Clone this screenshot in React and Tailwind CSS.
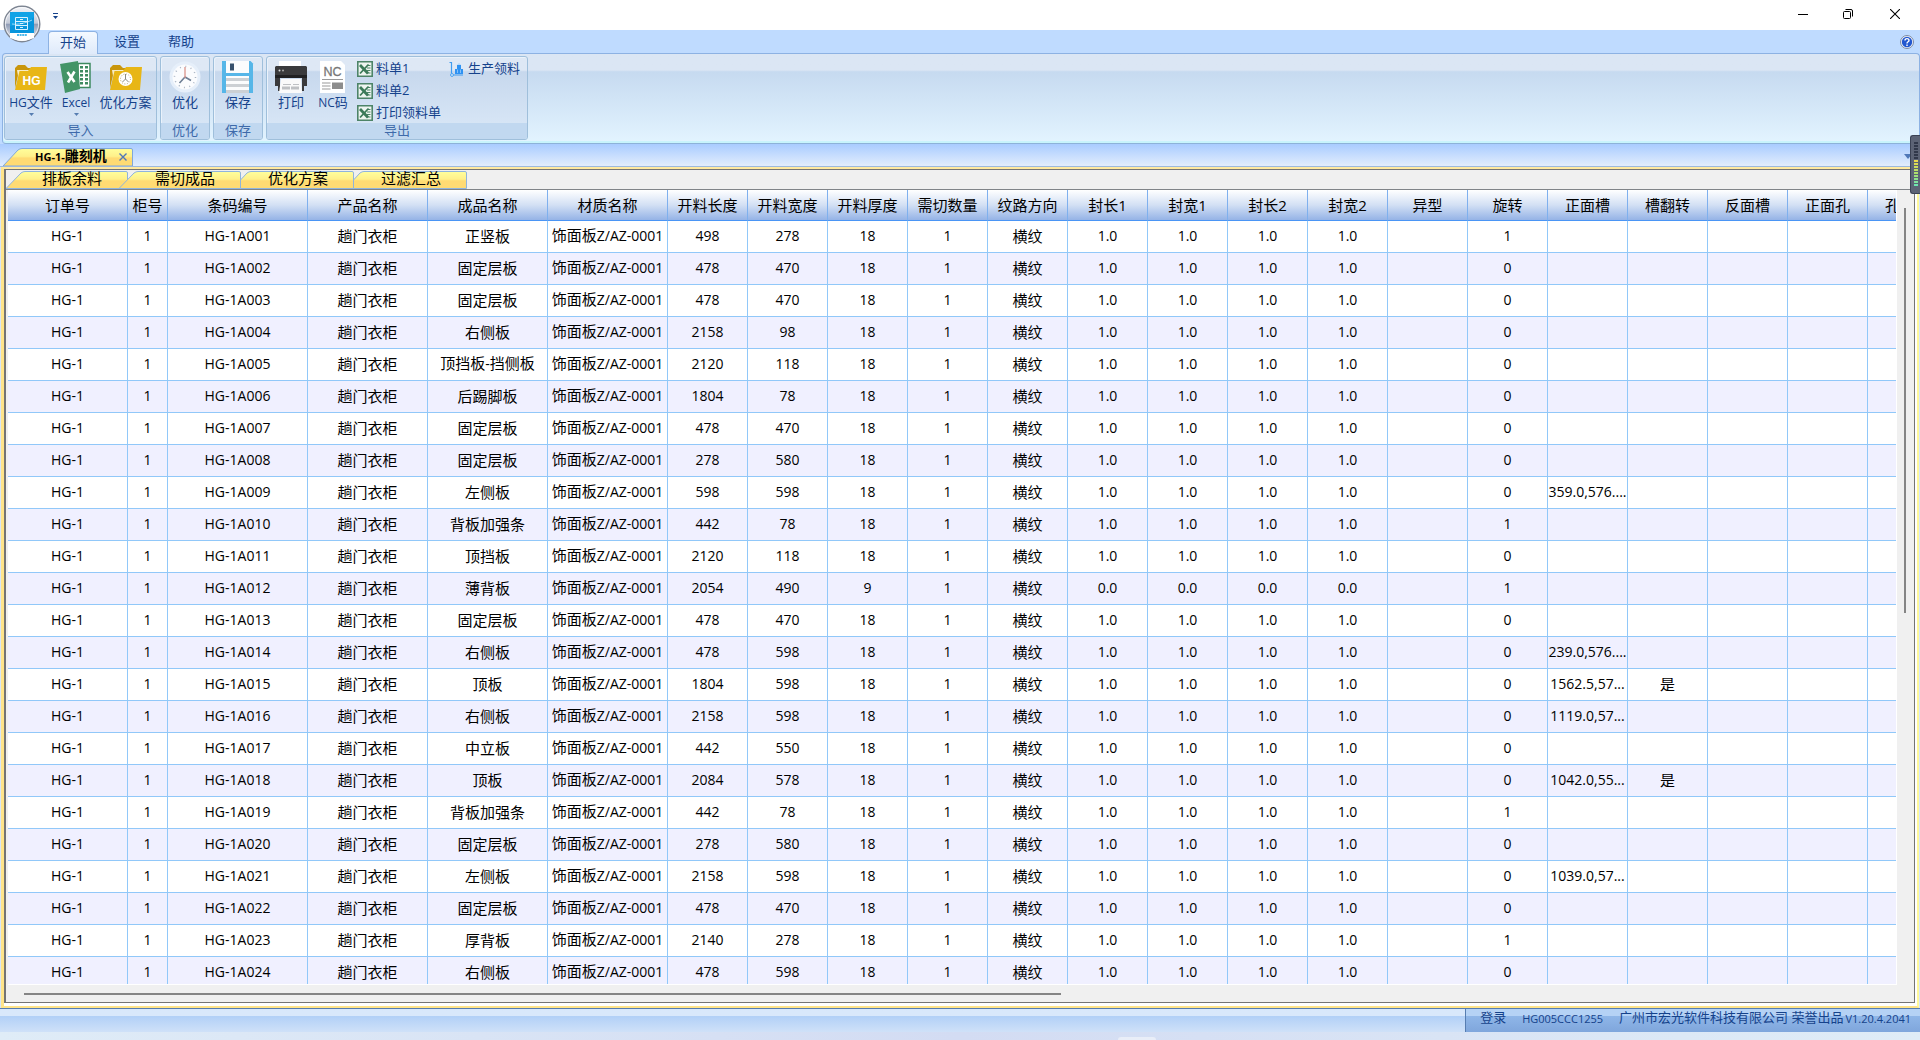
import clsx from "clsx";

const COLUMNS = [
  { key: "order", title: "订单号", width: "w-[120px]" },
  { key: "cabinet", title: "柜号", width: "w-[40px]" },
  { key: "barcode", title: "条码编号", width: "w-[140px]" },
  { key: "product", title: "产品名称", width: "w-[120px]" },
  { key: "part", title: "成品名称", width: "w-[120px]" },
  { key: "material", title: "材质名称", width: "w-[120px]" },
  { key: "length", title: "开料长度", width: "w-[80px]" },
  { key: "width", title: "开料宽度", width: "w-[80px]" },
  { key: "thick", title: "开料厚度", width: "w-[80px]" },
  { key: "count", title: "需切数量", width: "w-[80px]" },
  { key: "grain", title: "纹路方向", width: "w-[80px]" },
  { key: "l1", title: "封长1", width: "w-[80px]" },
  { key: "w1", title: "封宽1", width: "w-[80px]" },
  { key: "l2", title: "封长2", width: "w-[80px]" },
  { key: "w2", title: "封宽2", width: "w-[80px]" },
  { key: "shape", title: "异型", width: "w-[80px]" },
  { key: "rotate", title: "旋转", width: "w-[80px]" },
  { key: "frontSlot", title: "正面槽", width: "w-[80px]" },
  { key: "slotFlip", title: "槽翻转", width: "w-[80px]" },
  { key: "backSlot", title: "反面槽", width: "w-[80px]" },
  { key: "frontHole", title: "正面孔", width: "w-[80px]" },
  { key: "holeFlip", title: "孔翻转", width: "w-[80px]" },
];

// name, length, width, thickness, edge, rotate, front slot, slot flip
const PARTS = [
  ["正竖板", 498, 278, 18, "1.0", 1],
  ["固定层板", 478, 470, 18, "1.0", 0],
  ["固定层板", 478, 470, 18, "1.0", 0],
  ["右侧板", 2158, 98, 18, "1.0", 0],
  ["顶挡板-挡侧板", 2120, 118, 18, "1.0", 0],
  ["后踢脚板", 1804, 78, 18, "1.0", 0],
  ["固定层板", 478, 470, 18, "1.0", 0],
  ["固定层板", 278, 580, 18, "1.0", 0],
  ["左侧板", 598, 598, 18, "1.0", 0, "359.0,576...."],
  ["背板加强条", 442, 78, 18, "1.0", 1],
  ["顶挡板", 2120, 118, 18, "1.0", 0],
  ["薄背板", 2054, 490, 9, "0.0", 1],
  ["固定层板", 478, 470, 18, "1.0", 0],
  ["右侧板", 478, 598, 18, "1.0", 0, "239.0,576...."],
  ["顶板", 1804, 598, 18, "1.0", 0, "1562.5,57...", "是"],
  ["右侧板", 2158, 598, 18, "1.0", 0, "1119.0,57..."],
  ["中立板", 442, 550, 18, "1.0", 0],
  ["顶板", 2084, 578, 18, "1.0", 0, "1042.0,55...", "是"],
  ["背板加强条", 442, 78, 18, "1.0", 1],
  ["固定层板", 278, 580, 18, "1.0", 0],
  ["左侧板", 2158, 598, 18, "1.0", 0, "1039.0,57..."],
  ["固定层板", 478, 470, 18, "1.0", 0],
  ["厚背板", 2140, 278, 18, "1.0", 1],
  ["右侧板", 478, 598, 18, "1.0", 0],
];

const ROWS = PARTS.map(([part, length, width, thick, edge, rotate, frontSlot, slotFlip], i) => ({
  order: "HG-1",
  cabinet: 1,
  barcode: `HG-1A${String(i + 1).padStart(3, "0")}`,
  product: "趟门衣柜",
  part,
  material: "饰面板Z/AZ-0001",
  length,
  width,
  thick,
  count: 1,
  grain: "横纹",
  l1: edge,
  w1: edge,
  l2: edge,
  w2: edge,
  rotate,
  frontSlot,
  slotFlip,
}));

const SUB_TABS = ["排板余料", "需切成品", "优化方案", "过滤汇总"];

/* ---------- icons ---------- */

function LogoIcon() {
  return (
    <svg viewBox="0 0 38 38" className="size-[38px]">
      <defs>
        <linearGradient id="orb" x1="0" y1="0" x2="0" y2="1">
          <stop offset="0" stopColor="#f4f6fa" />
          <stop offset="0.48" stopColor="#c3c9d6" />
          <stop offset="0.5" stopColor="#8f9bb4" />
          <stop offset="1" stopColor="#f5f8fc" />
        </linearGradient>
      </defs>
      <circle cx="19" cy="19" r="17.8" fill="url(#orb)" stroke="#7d8592" strokeWidth="1.4" />
      <circle cx="19" cy="19" r="16.6" fill="none" stroke="#fff" strokeOpacity="0.7" />
      <path d="M7 7h24v26q-12 5-24 0z" fill="#fff" />
      <path d="M7 7h24v21H7z" fill="#0fa2e6" />
      <path d="M7 21c8 0 18-4 24-9v16H7z" fill="#0795dc" />
      <g fill="none" stroke="#d8f2ff" strokeWidth="1">
        <path d="M12.500 12.500h12v12h-12zM12.500 16.500h12M12.500 20.500h12M17 14.500h3M17 18.500h3M17 22.500h3" />
        <path d="M9 19c6 1 14-1 20-4" strokeOpacity="0.7" />
      </g>
      <path d="M14 30h10" stroke="#4db8ea" strokeWidth="2" strokeDasharray="2 0.600" />
    </svg>
  );
}

function FolderIcon({ children }) {
  return (
    <svg viewBox="0 0 32 32" className="size-8">
      <path d="M0 27V7l3-3h7l3 3h3v3H4z" fill="#c9960c" />
      <path d="M2 9h14v3L4 21z" fill="#f7ecc4" />
      <path d="M4.500 10H13l3-4h16L30 29H0z" fill="#e8b616" />
      {children}
    </svg>
  );
}

function HgFolderIcon() {
  return (
    <FolderIcon>
      <text x="16.500" y="23.500" textAnchor="middle" fontSize="12" fontWeight="700" fill="#fff" fontFamily="Liberation Sans, sans-serif">HG</text>
    </FolderIcon>
  );
}

function PlanFolderIcon() {
  return (
    <FolderIcon>
      <circle cx="15.500" cy="18" r="7" fill="#fff" />
      <circle cx="15.500" cy="18" r="5" fill="none" stroke="#b9a66c" strokeDasharray="1 1.600" />
      <path d="M15.500 13v5l3 3M15.500 18l-3 3" fill="none" stroke="#8a8a80" />
    </FolderIcon>
  );
}

function ExcelIcon() {
  return (
    <svg viewBox="0 0 32 32" className="size-8">
      <path d="M18 2.500h12v24H18z" fill="#fff" stroke="#3d8a5f" strokeWidth="1.500" />
      <path d="M20 5h3v2.500h-3zM25 5h3v2.500h-3zM20 9h3v2.500h-3zM25 9h3v2.500h-3zM20 13h3v2.500h-3zM25 13h3v2.500h-3zM20 17h3v2.500h-3zM25 17h3v2.500h-3zM20 21h3v2.500h-3zM25 21h3v2.500h-3z" fill="#3d8a5f" />
      <path d="M0 3l18-3 2 28-15 4z" fill="#439467" />
      <path d="M7.500 11l7 10M14.500 10.500L8 21.500" stroke="#fff" strokeWidth="2.600" />
    </svg>
  );
}

function ClockIcon() {
  return (
    <svg viewBox="0 0 32 32" className="size-8">
      <circle cx="16" cy="16" r="15.500" fill="#e6effa" />
      <circle cx="16" cy="16" r="12.500" fill="#fbfcfe" />
      <circle cx="16" cy="16" r="10.500" fill="none" stroke="#a9b4c4" strokeWidth="1.500" strokeDasharray="1 4.500" />
      <path d="M16 16l-5.500 6M16 16l6 3.500" stroke="#6e7f95" strokeWidth="1.600" />
      <path d="M16 6v11" stroke="#d98a80" strokeWidth="1.200" />
    </svg>
  );
}

function SaveIcon() {
  return (
    <svg viewBox="0 0 32 32" className="size-8">
      <path d="M0 0h28.500L31 2.500V32H0z" fill="#56b6e8" />
      <path d="M4 0h23v12H4zM4 15h23v17H4z" fill="#fbfcfd" />
      <path d="M8 2.500h4v7H8z" fill="#36506c" />
      <path d="M4 17h23v3H4zM4 23h23v3H4zM4 29h23v3H4z" fill="#ccd0d4" />
    </svg>
  );
}

function PrinterIcon() {
  return (
    <svg viewBox="0 0 32 32" className="size-8">
      <path d="M4 0h22v8H4z" fill="#fff" />
      <path d="M0 6l1-1h30l1 1v19h-3v5h-2V17H5v13H3v-5H0z" fill="#3a3a3c" />
      <path d="M0 14h32v3H0z" fill="#202022" />
      <circle cx="4.500" cy="9.500" r="1" fill="#ddd" />
      <circle cx="8" cy="9.500" r="1" fill="#aaa" />
      <path d="M6 18h20l1 14H4z" fill="#fafafa" />
      <path d="M8 23h8v1H8zM18 23h6v1h-6zM7 25.500h8v3H7zM16 25.500h8v3h-8z" fill="#bfc1c4" />
    </svg>
  );
}

function NcIcon() {
  return (
    <svg viewBox="0 0 26 32" className="h-8 w-[26px]">
      <path d="M0 0h21l4 4v28H0z" fill="#fff" />
      <text x="12.500" y="15" textAnchor="middle" fontSize="12.500" fill="#777" stroke="#777" strokeWidth="0.300" fontFamily="Liberation Sans, sans-serif">NC</text>
      <path d="M2 18.500h21M2 22h8.500M2 25h8.500M2 28h8.500" stroke="#999" />
      <path d="M12 21.500h11V28H12z" fill="#8c8c8c" />
    </svg>
  );
}

function SheetIcon() {
  return (
    <svg viewBox="0 0 16 16" className="size-4 shrink-0">
      <path d="M0.800 0.800h14.400v14.400H0.800z" fill="#eef5f0" stroke="#4d8468" strokeWidth="1.600" />
      <path d="M10 4.500h3.500M10 7h3.500M10 9.500h3.500M10 12h3.500" stroke="#4d8468" />
      <path d="M3 4l8 8.500" stroke="#3c7a59" strokeWidth="2.800" />
      <path d="M11.500 3.500L3 12.500" stroke="#3c7a59" strokeWidth="1.800" />
    </svg>
  );
}

function TrolleyIcon() {
  return (
    <svg viewBox="0 0 16 16" className="size-4 shrink-0">
      <path d="M0.500 1.500h2V13M3.500 14H14" fill="none" stroke="#3f9cf0" strokeWidth="1.200" />
      <circle cx="3" cy="14" r="1.400" fill="#fff" stroke="#3f9cf0" />
      <path d="M6 8h8v5H6zM8 4h4v4H8z" fill="#2f92f2" />
      <path d="M9 4V3h2v1M8.500 8.500V12M11.500 8.500V12" fill="none" stroke="#9ccdfa" strokeWidth="0.800" />
    </svg>
  );
}

function HelpIcon() {
  return (
    <svg viewBox="0 0 14 14" className="size-3.5">
      <circle cx="7" cy="7" r="6.500" fill="#f2f6fd" stroke="#7d8ba3" />
      <circle cx="7" cy="7" r="5.200" fill="#2257cf" />
      <path d="M5 5.500c0-2.600 4-2.400 4 0C9 6.800 7 6.800 7 8.400M7 9.500v1.400" fill="none" stroke="#fff" strokeWidth="1.400" />
    </svg>
  );
}

function Caret({ className }) {
  return (
    <svg viewBox="0 0 5 3" className={clsx("h-[3px] w-[5px]", className)}>
      <path d="M0 0h5L2.500 3z" fill="currentColor" />
    </svg>
  );
}

/* ---------- title bar ---------- */

function TitleBar() {
  return (
    <header className="relative flex h-[30px] shrink-0 items-center justify-between bg-white">
      <button aria-label="菜单" className="absolute top-[5px] left-[3px] z-10 rounded-full">
        <LogoIcon />
      </button>
      <button aria-label="自定义" className="mt-0.5 ml-[53px] flex flex-col items-center gap-0.5 text-[#15428b]">
        <span className="h-px w-[5px] bg-[#15428b]" />
        <Caret />
      </button>
      <div className="flex h-7 self-start text-black">
        <button aria-label="最小化" className="flex w-[45px] items-center justify-center">
          <svg viewBox="0 0 10 10" className="size-2.5"><path d="M0 5.500h10" stroke="currentColor" /></svg>
        </button>
        <button aria-label="还原" className="flex w-[45px] items-center justify-center">
          <svg viewBox="0 0 10 10" className="size-2.5" fill="none" stroke="currentColor">
            <rect x="0.500" y="2.500" width="7" height="7" rx="1" />
            <path d="M2.500 0.500H8A1.500 1.500 0 0 1 9.500 2v5.500" />
          </svg>
        </button>
        <button aria-label="关闭" className="flex w-[50px] items-center justify-center">
          <svg viewBox="0 0 10 10" className="size-2.5"><path d="M0 0l10 10M10 0L0 10" stroke="currentColor" strokeWidth="1.100" /></svg>
        </button>
      </div>
    </header>
  );
}

/* ---------- ribbon ---------- */

function MenuTabs() {
  return (
    <nav className="flex h-[23px] shrink-0 items-end bg-[#bfdbff] pr-1.5 pl-12 text-[13px] leading-5 text-[#15428b]">
      <button className="relative z-10 -mb-px h-[23px] w-[50px] rounded-t-[4px] border border-b-0 border-[#8db2e3] bg-gradient-to-b from-[#f4f9ff] to-[#dfeafa] pb-1">
        开始
      </button>
      <button className="ml-1 h-[22px] w-[50px] pb-0.5">设置</button>
      <button className="ml-1 h-[22px] w-[50px] pb-0.5">帮助</button>
      <button aria-label="帮助" className="mb-1 ml-auto">
        <HelpIcon />
      </button>
    </nav>
  );
}

function RibbonGroup({ title, children }) {
  return (
    <section className="flex flex-col overflow-hidden rounded-[3px] border border-[#9fbfdb] bg-gradient-to-b from-[#dee8f5] from-16% via-[#c7d8ed] via-18% to-[#dbe9f8] shadow-[inset_1px_1px_0_#eaf2fb]">
      <div className="flex flex-1 px-1 pt-1">{children}</div>
      <h2 className="h-4 bg-[#c1d8f0] text-center text-[13px] leading-[14px] text-[#3e6aaa]">{title}</h2>
    </section>
  );
}

function BigButton({ icon, label, caret, width }) {
  return (
    <button className={clsx("flex flex-col items-center text-[13px] leading-[18px] text-[#15428b]", width)}>
      {icon}
      <span className="whitespace-nowrap">{label}</span>
      {caret && <Caret className="mt-0.5 text-[#567db1]" />}
    </button>
  );
}

function SmallButton({ icon, label }) {
  return (
    <button className="flex h-4 items-center gap-[3px] text-[13px] leading-[14px] whitespace-nowrap text-[#15428b]">
      {icon}
      <span className="pb-0.5">{label}</span>
    </button>
  );
}

function Ribbon() {
  return (
    <div className="ml-0.5 flex h-[91px] shrink-0 gap-[3px] rounded-[4px] border border-[#8db2e3] border-b-[#8db2d8] bg-gradient-to-b from-[#dbe6f4] from-18% via-[#c6daf0] via-20% to-[#e3f4ff] px-px pt-0.5 pb-[3px] shadow-[inset_0_-2px_0_#c8f4fc]">
      <RibbonGroup title="导入">
        <BigButton icon={<HgFolderIcon />} label={<><span className="text-xs">HG</span>文件</>} caret width="w-[44px]" />
        <BigButton icon={<ExcelIcon />} label={<span className="text-xs">Excel</span>} caret width="w-[46px]" />
        <BigButton icon={<PlanFolderIcon />} label="优化方案" width="w-[53px]" />
      </RibbonGroup>
      <RibbonGroup title="优化">
        <BigButton icon={<ClockIcon />} label="优化" width="w-[40px]" />
      </RibbonGroup>
      <RibbonGroup title="保存">
        <BigButton icon={<SaveIcon />} label="保存" width="w-[40px]" />
      </RibbonGroup>
      <RibbonGroup title="导出">
        <BigButton icon={<PrinterIcon />} label="打印" width="w-[40px]" />
        <BigButton icon={<NcIcon />} label={<><span className="text-xs">NC</span>码</>} width="w-[44px]" />
        <div className="ml-0.5 flex flex-col gap-1.5">
          <SmallButton icon={<SheetIcon />} label="料单1" />
          <SmallButton icon={<SheetIcon />} label="料单2" />
          <SmallButton icon={<SheetIcon />} label="打印领料单" />
        </div>
        <div className="ml-2 pr-[3px]">
          <SmallButton icon={<TrolleyIcon />} label="生产领料" />
        </div>
      </RibbonGroup>
    </div>
  );
}

/* ---------- document tabs ---------- */

function DocumentTabs() {
  return (
    <div className="flex h-[22px] shrink-0 items-end justify-between bg-gradient-to-b from-[#a9ccff] to-[#e2edfc]">
      <div className="relative ml-[3px] flex h-[18px] w-[130px] items-center">
        <svg viewBox="0 0 130 18" preserveAspectRatio="none" className="absolute inset-0 h-full w-full">
          <defs>
            <linearGradient id="tab" x1="0" y1="0" x2="0" y2="1">
              <stop offset="0" stopColor="#ffff9c" />
              <stop offset="0.45" stopColor="#fff08a" />
              <stop offset="0.55" stopColor="#ffdb73" />
              <stop offset="1" stopColor="#ffdb73" />
            </linearGradient>
          </defs>
          <path d="M0 18L15 2q2-1.500 4-1.500h109q1.500 0 1.500 1.500v16z" fill="url(#tab)" stroke="#7fa8dc" />
        </svg>
        <button className="relative ml-8 pb-0.5 text-sm leading-4 font-bold whitespace-nowrap text-black">
          <span className="text-[11px]">HG-1-</span>雕刻机
        </button>
        <button aria-label="关闭标签" className="relative mr-1.5 ml-auto text-[#4f78b8]">
          <svg viewBox="0 0 8 8" className="size-2"><path d="M0.500 0.500l7 7M7.500 0.500l-7 7" stroke="currentColor" strokeWidth="1.400" /></svg>
        </button>
      </div>
      <button aria-label="标签列表" className="mr-2 mb-[7px] text-[#4f78b8]">
        <svg viewBox="0 0 8 5" className="h-[5px] w-2"><path d="M0 0h8L4 5z" fill="currentColor" /></svg>
      </button>
    </div>
  );
}

// the first two tabs show their whole slant, the rest tuck in behind their neighbour
function SubTabs() {
  return (
    <nav className="flex h-[19px] shrink-0 pt-px">
      {SUB_TABS.map((label, i) => (
        <button key={label} className="relative -mr-[9px] flex h-[18px] w-[122px] items-start justify-center pl-2.5 text-[15px] leading-[14px] text-black">
          <svg viewBox="0 0 122 18" preserveAspectRatio="none" className="absolute inset-0 h-full w-full">
            <path
              d={
                i < 2
                  ? "M0 17.500L15 2q2-1.500 4-1.500h101q1.500 0 1.500 1.500v15.500z"
                  : "M8.500 17.500V9L15 2q2-1.500 4-1.500h101q1.500 0 1.500 1.500v15.500z"
              }
              fill="url(#tab)"
              stroke="#8fb4dd"
            />
          </svg>
          <span className="relative">{label}</span>
        </button>
      ))}
    </nav>
  );
}

/* ---------- table ---------- */

// Latin characters are set one step smaller than the Chinese ones
function CellText({ value }) {
  if (value === undefined) return null;
  return String(value)
    .split(/([\x20-\x7e]+)/)
    .filter(Boolean)
    .map((part, i) => (
      <span key={i} className={/^[\x20-\x7e]/.test(part) ? "text-sm" : "text-[15px]"}>
        {part}
      </span>
    ));
}

function PartsTable() {
  return (
    <table className="w-[1940px] table-fixed border-separate border-spacing-0 text-center text-[15px] leading-5 whitespace-nowrap text-black">
      <thead>
        <tr className="h-[31px]">
          {COLUMNS.map((col) => (
            <th
              key={col.key}
              scope="col"
              className={clsx(
                "border-r border-b border-r-[#7fb0ee] border-b-[#4a95f5] bg-gradient-to-b from-white via-[#d3e0f4] to-[#95b3e6] p-0 font-normal",
                col.width,
              )}
            >
              {col.title}
            </th>
          ))}
        </tr>
      </thead>
      <tbody>
        {ROWS.map((row) => (
          <tr key={row.barcode} className="h-8 bg-white even:bg-[#f0f0ff]">
            {COLUMNS.map((col) => (
              <td key={col.key} className="overflow-hidden border-r border-b border-[#91c8f9] p-0 pb-0.5">
                <CellText value={row[col.key]} />
              </td>
            ))}
          </tr>
        ))}
      </tbody>
    </table>
  );
}

function Workspace() {
  return (
    <main className="flex min-h-0 flex-1 flex-col border-t border-[#9db9dd] bg-[#d6e5f8] px-px">
      <div className="flex min-h-0 flex-1 flex-col border-2 border-l-[3px] border-[#ffe48a] border-t-[#ffe9a0] border-r-[#fff89a] bg-white pr-0.5 pb-[3px]">
        <div className="flex min-h-0 flex-1 flex-col border border-l-2 border-[#747474] bg-[#f0f0f0]">
          <SubTabs />
          <div className="flex min-h-0 flex-1 flex-col border-t border-[#808488] pl-0.5">
            <div className="flex min-h-0 flex-1">
              <div className="min-w-0 flex-1 overflow-hidden border-r border-b border-white">
                <PartsTable />
              </div>
              <div className="w-[17px] shrink-0 pt-[18px] pl-[7px]">
                <div className="h-[405px] w-0.5 bg-[#858585]" />
              </div>
            </div>
            <div className="flex h-[17px] shrink-0 items-center pl-4">
              <div className="h-0.5 w-[1037px] bg-[#858585]" />
            </div>
          </div>
        </div>
      </div>
    </main>
  );
}

function StatusBar() {
  return (
    <footer className="flex h-6 shrink-0 border-t border-[#567db1] bg-gradient-to-b from-[#d9e8fb] from-30% via-[#b2d0f7] via-32% to-[#cfe1f8] text-[13px] leading-4 whitespace-nowrap text-[#15428b]">
      <div className="ml-auto flex items-start border-l border-[#567db1] bg-gradient-to-b from-[#b5d2f5] from-30% via-[#8fb6e8] via-32% to-[#7fa6dc] pr-[9px] pl-[14px]">
        <button>登录</button>
        <span className="ml-4 pt-0.5 text-[11px]">HG005CCC1255</span>
        <span className="ml-4">广州市宏光软件科技有限公司 荣誉出品</span>
        <span className="ml-0.5 pt-0.5 text-[11px]">V1.20.4.2041</span>
      </div>
    </footer>
  );
}

// level meter docked on the right edge of the window
function LevelMeter() {
  return (
    <div className="absolute top-[135px] right-0 z-20 h-[59px] w-2.5 rounded-l-[3px] border border-r-0 border-[#3b4254] bg-[#5c6375]">
      <svg viewBox="0 0 4 46" className="mt-[6px] ml-[3px] h-[46px] w-1">
        <defs>
          <linearGradient id="level" x1="0" y1="0" x2="0" y2="46" gradientUnits="userSpaceOnUse">
            <stop offset="0.38" stopColor="#31384a" />
            <stop offset="0.39" stopColor="#f0d84a" />
            <stop offset="0.7" stopColor="#a8e070" />
            <stop offset="1" stopColor="#5ee6c0" />
          </linearGradient>
        </defs>
        <path d="M0 0h4v2H0zM0 3h4v2H0zM0 6h4v2H0zM0 9h4v2H0zM0 12h4v2H0zM0 15h4v2H0zM0 18h4v2H0zM0 21h4v2H0zM0 24h4v2H0zM0 27h4v2H0zM0 30h4v2H0zM0 33h4v2H0zM0 36h4v2H0zM0 39h4v2H0zM0 42h4v2H0z" fill="url(#level)" />
      </svg>
    </div>
  );
}

export default function App() {
  return (
    <div className="relative flex h-screen flex-col overflow-hidden bg-[#bfdbff] font-['Open_Sans','Noto_Sans_CJK_SC',sans-serif]">
      <TitleBar />
      <MenuTabs />
      <Ribbon />
      <DocumentTabs />
      <Workspace />
      <StatusBar />
      <div className="flex h-2 shrink-0 items-end justify-center bg-gradient-to-r from-[#dfecf7] via-[#d3dcf3] to-[#dfecf7]">
        <div className="ml-[354px] h-[3px] w-[38px] rounded-t-[3px] bg-[#e9eef8]" />
      </div>
      <LevelMeter />
    </div>
  );
}
